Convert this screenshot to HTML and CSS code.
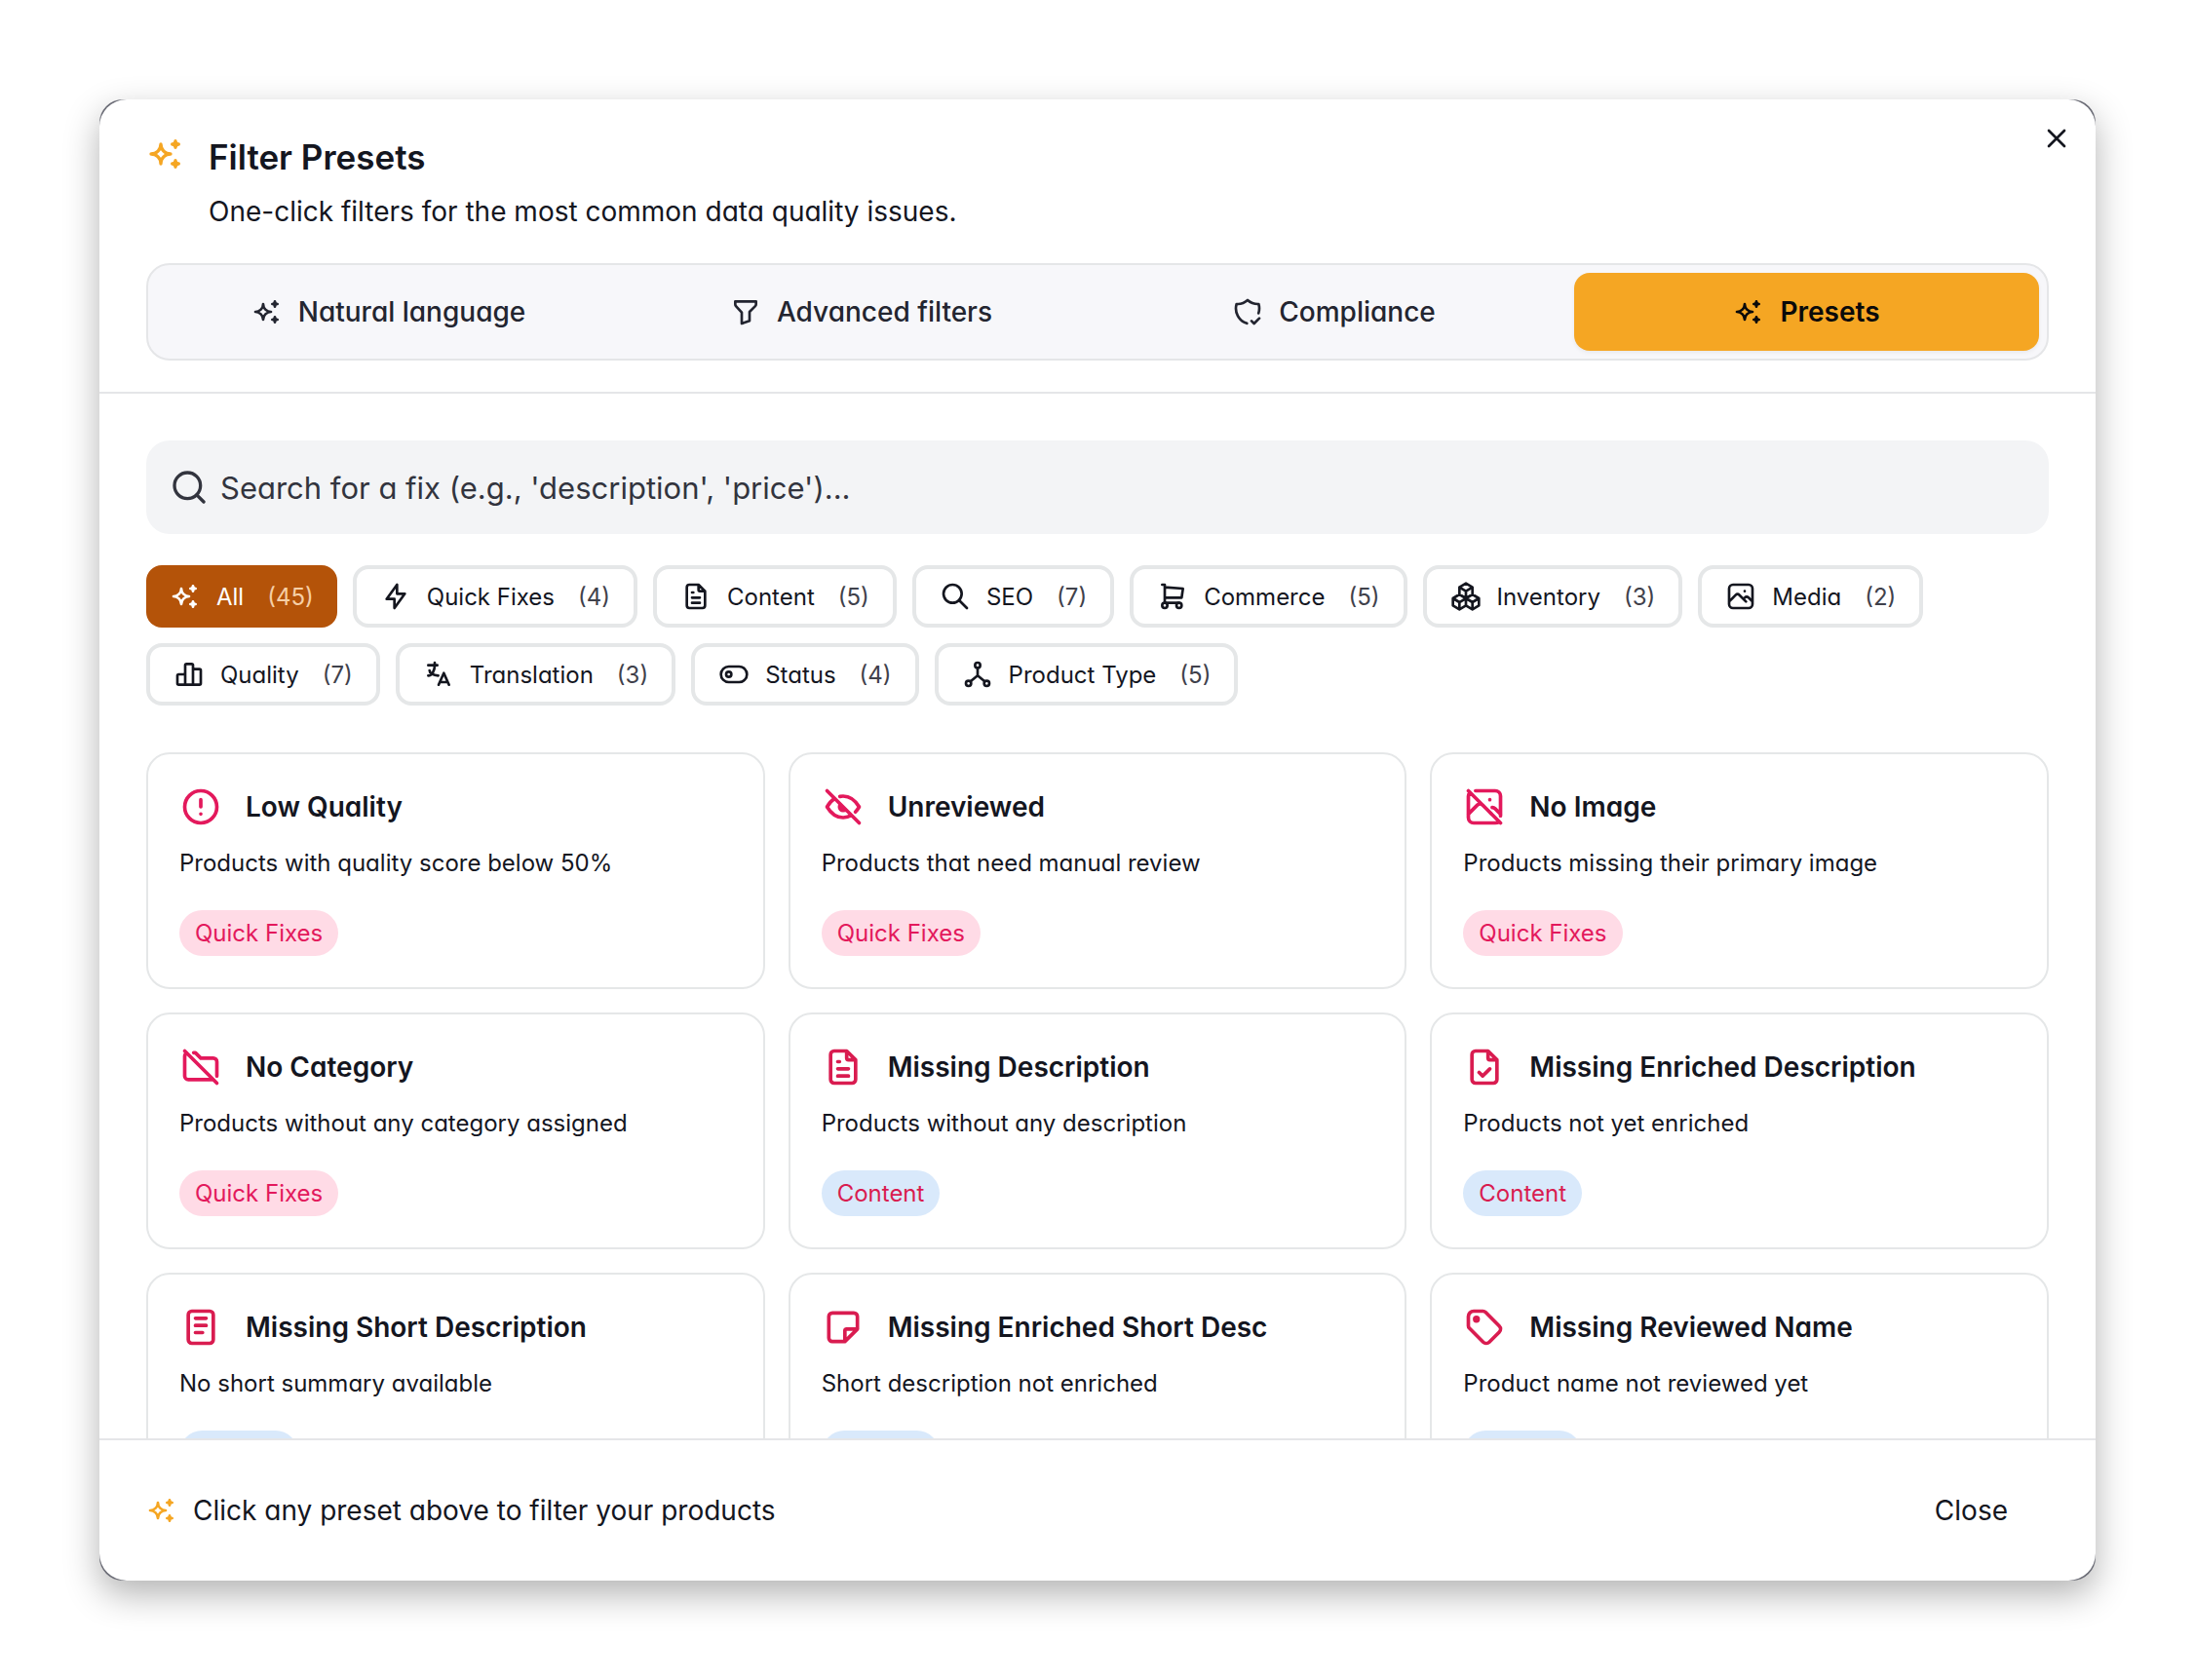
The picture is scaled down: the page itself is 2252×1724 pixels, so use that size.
FILE: index.html
```html
<!DOCTYPE html>
<html lang="en">
<head>
    <meta charset="UTF-8">
    <meta name="viewport" content="width=device-width, initial-scale=1">
    <title>Filter Presets</title>
    <link rel="stylesheet" href="styles.css">
</head>
<body>
    <!-- icon sprite -->
    <svg class="sprite" aria-hidden="true">
        <symbol id="i-sparkles" viewBox="0 0 24 24"><path d="M16 18a2 2 0 0 1 2 2a2 2 0 0 1 2 -2a2 2 0 0 1 -2 -2a2 2 0 0 1 -2 2zm0 -12a2 2 0 0 1 2 2a2 2 0 0 1 2 -2a2 2 0 0 1 -2 -2a2 2 0 0 1 -2 2zm-7 12a6 6 0 0 1 6 -6a6 6 0 0 1 -6 -6a6 6 0 0 1 -6 6a6 6 0 0 1 6 6z"/></symbol>
        <symbol id="i-filter" viewBox="0 0 24 24"><path d="M4 4h16v2.172a2 2 0 0 1 -.586 1.414l-4.414 4.414v7l-6 2v-8.5l-4.48 -4.928a2 2 0 0 1 -.52 -1.345v-2.227z"/></symbol>
        <symbol id="i-shield" viewBox="0 0 24 24"><path d="M11.46 20.846a12 12 0 0 1 -7.96 -14.846a12 12 0 0 0 8.5 -3a12 12 0 0 0 8.5 3a12 12 0 0 1 -.09 7.06M15 19l2 2l4 -4"/></symbol>
        <symbol id="i-x" viewBox="0 0 24 24"><path d="M18 6l-12 12M6 6l12 12"/></symbol>
        <symbol id="i-find" viewBox="0 0 24 24"><circle cx="11" cy="11" r="8"/><path d="M21 21l-4.3 -4.3"/></symbol>
        <symbol id="i-search" viewBox="0 0 24 24"><circle cx="10" cy="10" r="7"/><path d="M21 21l-6 -6"/></symbol>
        <symbol id="i-bolt" viewBox="0 0 24 24"><path d="M13 3v7h6l-8 11v-7h-6l8 -11"/></symbol>
        <symbol id="i-file-text" viewBox="0 0 24 24"><path d="M14 3v4a1 1 0 0 0 1 1h4M17 21h-10a2 2 0 0 1 -2 -2v-14a2 2 0 0 1 2 -2h7l5 5v11a2 2 0 0 1 -2 2zM9 9h1M9 13h6M9 17h6"/></symbol>
        <symbol id="i-cart" viewBox="0 0 24 24"><circle cx="6" cy="19" r="2"/><circle cx="17" cy="19" r="2"/><path d="M17 17h-11v-14h-2M6 5l14 1l-1 7h-13"/></symbol>
        <symbol id="i-packages" viewBox="0 0 24 24"><path d="M7 16.5l-5 -3l5 -3l5 3v5.5l-5 3zM2 13.5v5.5l5 3M7 16.545l5 -3.03M17 16.5l-5 -3l5 -3l5 3v5.5l-5 3zM12 19l5 3M17 16.5l5 -3M12 13.5v-5.5l-5 -3l5 -3l5 3v5.5M7 5.03v5.455M12 8l5 -3"/></symbol>
        <symbol id="i-photo" viewBox="0 0 24 24"><path d="M15 8h.01M3 6a3 3 0 0 1 3 -3h12a3 3 0 0 1 3 3v12a3 3 0 0 1 -3 3h-12a3 3 0 0 1 -3 -3v-12zM3 16l5 -5c.928 -.893 2.072 -.893 3 0l5 5M14 14l1 -1c.928 -.893 2.072 -.893 3 0l3 3"/></symbol>
        <symbol id="i-chart" viewBox="0 0 24 24"><path d="M3 13a1 1 0 0 1 1 -1h4a1 1 0 0 1 1 1v6a1 1 0 0 1 -1 1h-4a1 1 0 0 1 -1 -1zM15 9a1 1 0 0 1 1 -1h4a1 1 0 0 1 1 1v10a1 1 0 0 1 -1 1h-4a1 1 0 0 1 -1 -1zM9 5a1 1 0 0 1 1 -1h4a1 1 0 0 1 1 1v14a1 1 0 0 1 -1 1h-4a1 1 0 0 1 -1 -1zM4 20h14"/></symbol>
        <symbol id="i-language" viewBox="0 0 24 24"><path d="M4 5h7M9 3v2c0 4.418 -2.239 8 -5 8M5 9c0 2.144 2.952 3.908 6.7 4M12 20l4 -9l4 9M19.1 18h-6.2"/></symbol>
        <symbol id="i-toggle" viewBox="0 0 24 24"><circle cx="8" cy="12" r="2"/><rect x="2" y="6" width="20" height="12" rx="6"/></symbol>
        <symbol id="i-hierarchy" viewBox="0 0 24 24"><circle cx="12" cy="5" r="2"/><circle cx="5" cy="19" r="2"/><circle cx="19" cy="19" r="2"/><path d="M6.5 17.5l5.5 -4.5l5.5 4.5M12 7v6"/></symbol>
        <symbol id="i-alert" viewBox="0 0 24 24"><circle cx="12" cy="12" r="9"/><path d="M12 8v4M12 16h.01"/></symbol>
        <symbol id="i-eye-off" viewBox="0 0 24 24"><path d="M10.585 10.587a2 2 0 0 0 2.829 2.828M16.681 16.673a8.717 8.717 0 0 1 -4.681 1.327c-3.6 0 -6.6 -2 -9 -6c1.272 -2.12 2.712 -3.678 4.32 -4.674m2.86 -1.146a9.055 9.055 0 0 1 1.82 -.18c3.6 0 6.6 2 9 6c-.666 1.11 -1.379 2.067 -2.138 2.87M3 3l18 18"/></symbol>
        <symbol id="i-photo-off" viewBox="0 0 24 24"><path d="M15 8h.01M7 3h11a3 3 0 0 1 3 3v11m-.856 3.099a2.991 2.991 0 0 1 -2.144 .901h-12a3 3 0 0 1 -3 -3v-12c0 -.845 .349 -1.608 .91 -2.153M3 16l5 -5c.928 -.893 2.072 -.893 3 0l5 5M16.33 12.338c.574 -.054 1.155 .166 1.67 .662l3 3M3 3l18 18"/></symbol>
        <symbol id="i-folder-off" viewBox="0 0 24 24"><path d="M3 3l18 18M19 19h-14a2 2 0 0 1 -2 -2v-11a2 2 0 0 1 1.189 -1.829M8 4h1l3 3h7a2 2 0 0 1 2 2v8"/></symbol>
        <symbol id="i-file-check" viewBox="0 0 24 24"><path d="M14 3v4a1 1 0 0 0 1 1h4M17 21h-10a2 2 0 0 1 -2 -2v-14a2 2 0 0 1 2 -2h7l5 5v11a2 2 0 0 1 -2 2zM9 15l2 2l4 -4"/></symbol>
        <symbol id="i-notes" viewBox="0 0 24 24"><rect x="5" y="3" width="14" height="18" rx="2"/><path d="M9 7h6M9 11h6M9 15h4"/></symbol>
        <symbol id="i-note" viewBox="0 0 24 24"><path d="M13 20l7 -7M13 20v-6a1 1 0 0 1 1 -1h6v-7a2 2 0 0 0 -2 -2h-12a2 2 0 0 0 -2 2v12a2 2 0 0 0 2 2h7"/></symbol>
        <symbol id="i-tag" viewBox="0 0 24 24"><circle cx="7.5" cy="7.5" r="1"/><path d="M3 6v5.172a2 2 0 0 0 .586 1.414l7.71 7.71a2.41 2.41 0 0 0 3.408 0l5.592 -5.592a2.41 2.41 0 0 0 0 -3.408l-7.71 -7.71a2 2 0 0 0 -1.414 -.586h-5.172a3 3 0 0 0 -3 3z"/></symbol>
    </svg>

    <div class="dialog" role="dialog" aria-labelledby="dialog-title">
        <div class="dialog-panel">
            <button class="btn-x" type="button" aria-label="Close dialog"><svg class="icon"><use href="#i-x"/></svg></button>

            <header class="dialog-header">
                <div class="heading">
                    <svg class="icon icon-md accent"><use href="#i-sparkles"/></svg>
                    <div class="heading-text">
                        <h1 id="dialog-title">Filter Presets</h1>
                        <p>One-click filters for the most common data quality issues.</p>
                    </div>
                </div>
                <div class="tabs" role="tablist">
                    <button class="tab" type="button" role="tab"><svg class="icon"><use href="#i-sparkles"/></svg>Natural language</button>
                    <button class="tab" type="button" role="tab"><svg class="icon"><use href="#i-filter"/></svg>Advanced filters</button>
                    <button class="tab" type="button" role="tab"><svg class="icon"><use href="#i-shield"/></svg>Compliance</button>
                    <button class="tab active" type="button" role="tab" aria-selected="true"><svg class="icon"><use href="#i-sparkles"/></svg>Presets</button>
                </div>
            </header>

            <main class="dialog-body">
                <label class="search">
                    <svg class="icon icon-md"><use href="#i-find"/></svg>
                    <input type="text" aria-label="Search for a fix" placeholder="Search for a fix (e.g., 'description', 'price')...">
                </label>

                <div class="chips">
                    <button class="chip active" type="button"><svg class="icon"><use href="#i-sparkles"/></svg>All <span class="count">(45)</span></button>
                    <button class="chip" type="button"><svg class="icon"><use href="#i-bolt"/></svg>Quick Fixes <span class="count">(4)</span></button>
                    <button class="chip" type="button"><svg class="icon"><use href="#i-file-text"/></svg>Content <span class="count">(5)</span></button>
                    <button class="chip" type="button"><svg class="icon"><use href="#i-search"/></svg>SEO <span class="count">(7)</span></button>
                    <button class="chip" type="button"><svg class="icon"><use href="#i-cart"/></svg>Commerce <span class="count">(5)</span></button>
                    <button class="chip" type="button"><svg class="icon"><use href="#i-packages"/></svg>Inventory <span class="count">(3)</span></button>
                    <button class="chip" type="button"><svg class="icon"><use href="#i-photo"/></svg>Media <span class="count">(2)</span></button>
                    <button class="chip" type="button"><svg class="icon"><use href="#i-chart"/></svg>Quality <span class="count">(7)</span></button>
                    <button class="chip" type="button"><svg class="icon"><use href="#i-language"/></svg>Translation <span class="count">(3)</span></button>
                    <button class="chip" type="button"><svg class="icon"><use href="#i-toggle"/></svg>Status <span class="count">(4)</span></button>
                    <button class="chip" type="button"><svg class="icon"><use href="#i-hierarchy"/></svg>Product Type <span class="count">(5)</span></button>
                </div>

                <div class="presets">
                    <button class="preset quick" type="button">
                        <span class="preset-title"><svg class="icon icon-lg"><use href="#i-alert"/></svg>Low Quality</span>
                        <span class="preset-desc">Products with quality score below 50%</span>
                        <span class="badge">Quick Fixes</span>
                    </button>
                    <button class="preset quick" type="button">
                        <span class="preset-title"><svg class="icon icon-lg"><use href="#i-eye-off"/></svg>Unreviewed</span>
                        <span class="preset-desc">Products that need manual review</span>
                        <span class="badge">Quick Fixes</span>
                    </button>
                    <button class="preset quick" type="button">
                        <span class="preset-title"><svg class="icon icon-lg"><use href="#i-photo-off"/></svg>No Image</span>
                        <span class="preset-desc">Products missing their primary image</span>
                        <span class="badge">Quick Fixes</span>
                    </button>
                    <button class="preset quick" type="button">
                        <span class="preset-title"><svg class="icon icon-lg"><use href="#i-folder-off"/></svg>No Category</span>
                        <span class="preset-desc">Products without any category assigned</span>
                        <span class="badge">Quick Fixes</span>
                    </button>
                    <button class="preset content" type="button">
                        <span class="preset-title"><svg class="icon icon-lg"><use href="#i-file-text"/></svg>Missing Description</span>
                        <span class="preset-desc">Products without any description</span>
                        <span class="badge">Content</span>
                    </button>
                    <button class="preset content" type="button">
                        <span class="preset-title"><svg class="icon icon-lg"><use href="#i-file-check"/></svg>Missing Enriched Description</span>
                        <span class="preset-desc">Products not yet enriched</span>
                        <span class="badge">Content</span>
                    </button>
                    <button class="preset content" type="button">
                        <span class="preset-title"><svg class="icon icon-lg"><use href="#i-notes"/></svg>Missing Short Description</span>
                        <span class="preset-desc">No short summary available</span>
                        <span class="badge">Content</span>
                    </button>
                    <button class="preset content" type="button">
                        <span class="preset-title"><svg class="icon icon-lg"><use href="#i-note"/></svg>Missing Enriched Short Desc</span>
                        <span class="preset-desc">Short description not enriched</span>
                        <span class="badge">Content</span>
                    </button>
                    <button class="preset content" type="button">
                        <span class="preset-title"><svg class="icon icon-lg"><use href="#i-tag"/></svg>Missing Reviewed Name</span>
                        <span class="preset-desc">Product name not reviewed yet</span>
                        <span class="badge">Content</span>
                    </button>
                </div>
            </main>

            <footer class="dialog-footer">
                <p class="hint"><svg class="icon accent"><use href="#i-sparkles"/></svg>Click any preset above to filter your products</p>
                <button class="btn-close" type="button">Close</button>
            </footer>
        </div>
    </div>
</body>
</html>
```
FILE: styles.css
```css
* {
    margin: 0;
    padding: 0;
    box-sizing: border-box;
}

body {
    height: 100vh;
    padding: 102px;
    background: #fff;
    color: #14161f;
    font-family: Inter, 'Liberation Sans', sans-serif;
    font-feature-settings: 'cv11';
    font-size: 28px;
}

button,
input {
    font: inherit;
    font-feature-settings: inherit;
    color: inherit;
    background: none;
    border: none;
}

button {
    cursor: pointer;
}

.sprite {
    display: none;
}

.icon {
    width: 32px;
    height: 32px;
    flex: none;
    fill: none;
    stroke: currentColor;
    stroke-width: 2;
    stroke-linecap: round;
    stroke-linejoin: round;
}

.icon-md {
    width: 40px;
    height: 40px;
}

.icon-lg {
    width: 44px;
    height: 44px;
}

.accent {
    color: #f5a623;
}

/* Dialog */

.dialog {
    height: 100%;
    border-radius: 24px;
    background: #6b6c76;
    box-shadow: 0 14px 36px rgba(0, 0, 0, 0.3);
}

.dialog-panel {
    position: relative;
    display: flex;
    flex-direction: column;
    height: 100%;
    border-radius: 28px;
    background: #fff;
    overflow: hidden;
}

.btn-x {
    position: absolute;
    top: 24px;
    right: 24px;
    display: flex;
}

.dialog-header {
    padding: 36px 48px 32px;
    border-bottom: 2px solid #e5e6e8;
}

.heading {
    display: flex;
    gap: 24px;
    margin-bottom: 30px;
}

.heading-text {
    display: grid;
    gap: 10px;
    line-height: 46px;
}

h1 {
    font-size: 35px;
    font-weight: 600;
}

/* Tabs */

.tabs {
    display: grid;
    grid-template-columns: repeat(4, 1fr);
    gap: 8px;
    padding: 8px;
    border: 2px solid #e5e6e8;
    border-radius: 24px;
    background: #f7f7fa;
}

.tab {
    display: flex;
    align-items: center;
    justify-content: center;
    gap: 16px;
    height: 80px;
    border-radius: 16px;
    color: #232530;
    font-weight: 500;
}

.tab.active {
    background: #f5a623;
    color: #0a0a0a;
    font-weight: 600;
    box-shadow: 0 2px 4px rgba(0, 0, 0, 0.06);
}

/* Body */

.dialog-body {
    flex: 1;
    min-height: 0;
    padding: 48px 48px 0;
    overflow-y: auto;
    scrollbar-width: none;
}

.search {
    display: flex;
    align-items: center;
    gap: 12px;
    height: 96px;
    padding: 0 24px;
    border-radius: 24px;
    background: #f3f4f6;
    color: #32343e;
    font-size: 31px;
}

.search input {
    flex: 1;
    min-width: 0;
    outline: none;
}

.search input::placeholder {
    color: #32343e;
    opacity: 1;
}

.chips {
    display: flex;
    flex-wrap: wrap;
    gap: 16px;
    margin: 32px 0 48px;
    font-size: 24px;
}

.chip {
    display: flex;
    align-items: center;
    gap: 16px;
    height: 64px;
    padding: 0 24px;
    border: 4px solid #e5e7e8;
    border-radius: 16px;
}

.chip.active {
    border: none;
    background: #b45309;
    color: #fff;
}

.count {
    margin-left: 8px;
    color: #3f414b;
}

.chip.active .count {
    color: #f6cfa6;
}

/* Preset cards */

.presets {
    display: grid;
    grid-template-columns: repeat(3, 1fr);
    gap: 24px;
}

.preset {
    display: flex;
    flex-direction: column;
    align-items: flex-start;
    padding: 32px;
    border: 2px solid #e5e7e8;
    border-radius: 24px;
    text-align: left;
}

.preset-title {
    display: flex;
    align-items: center;
    gap: 24px;
    font-weight: 600;
}

.preset-desc {
    margin: 18px 0 30px;
    font-size: 24px;
    line-height: 36px;
}

.badge {
    padding: 0 16px;
    border-radius: 24px;
    font-size: 24px;
    line-height: 47px;
}

.quick .icon,
.quick .badge {
    color: #e3195c;
}

.quick .badge {
    background: #ffdbe6;
}

.content .icon,
.content .badge {
    color: #d91c50;
}

.content .badge {
    background: #d9e9fb;
}

/* Footer */

.dialog-footer {
    display: flex;
    align-items: center;
    justify-content: space-between;
    height: 146px;
    padding: 0 48px;
    border-top: 2px solid #e5e6e8;
}

.hint {
    display: flex;
    align-items: center;
    gap: 16px;
}

.btn-close {
    height: 80px;
    padding: 0 42px;
}
```
